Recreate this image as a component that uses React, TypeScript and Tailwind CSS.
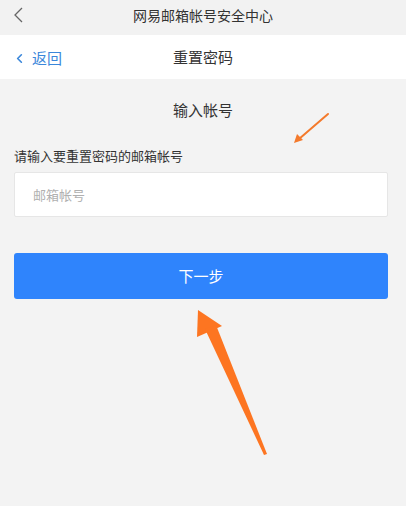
import { ChevronLeft } from "lucide-react";

const font = { fontFamily: '"Noto Sans CJK SC", "Noto Sans", sans-serif' };

export default function App() {
  return (
    <div className="relative flex h-[506px] w-[406px] flex-col bg-[#f3f3f3]" style={font}>
      {/* Browser title bar */}
      <div className="relative flex h-[35px] items-center justify-center bg-[#f2f2f2] pb-[5px]">
        <svg className="absolute left-[13px] top-[7px]" width="11" height="16" viewBox="0 0 11 16">
          <path d="M9 1 2 8l7 7" fill="none" stroke="#666" strokeWidth="1.3" />
        </svg>
        <span className="text-[14px] text-[#333]">网易邮箱帐号安全中心</span>
      </div>

      {/* Nav bar */}
      <div className="relative flex h-[44px] items-center justify-center bg-white">
        <div className="absolute left-[12px] top-[12px] flex items-center gap-[5px] text-[#3b87da]">
          <ChevronLeft className="h-[15px] w-[15px]" strokeWidth={2.6} />
          <span className="text-[15px]">返回</span>
        </div>
        <span className="text-[15px] text-[#333]">重置密码</span>
      </div>

      {/* Form */}
      <div className="flex flex-col pl-[14px] pr-[18px] pt-[20px]">
        <p className="pl-[4px] text-center text-[15px] leading-[22px] text-[#333]">输入帐号</p>
        <p className="mt-[26px] text-[13px] leading-[18px] text-[#333]">请输入要重置密码的邮箱帐号</p>
        <div className="mt-[7px] flex h-[45px] items-center rounded-[2px] border border-[#e6e6e6] bg-white px-[18px]">
          <span className="text-[13px] text-[#b0b0b0]">邮箱帐号</span>
        </div>
        <button className="mt-[36px] h-[46px] rounded-[3px] bg-[#2f84fc] text-[15px] text-white">
          下一步
        </button>
      </div>

      {/* Annotation arrows */}
      <svg className="pointer-events-none absolute left-0 top-0" width="406" height="506" viewBox="0 0 406 506">
        <line x1="328" y1="114" x2="299" y2="139" stroke="#f47a2c" strokeWidth="2" strokeLinecap="round" />
        <polygon points="294,143 297,134 303,140" fill="#f47a2c" />
        <polygon points="198,310 197,337 222,326" fill="#fd7521" />
        <polygon points="205,329 216,325 267,454 264,455" fill="#fd7521" />
      </svg>
    </div>
  );
}
